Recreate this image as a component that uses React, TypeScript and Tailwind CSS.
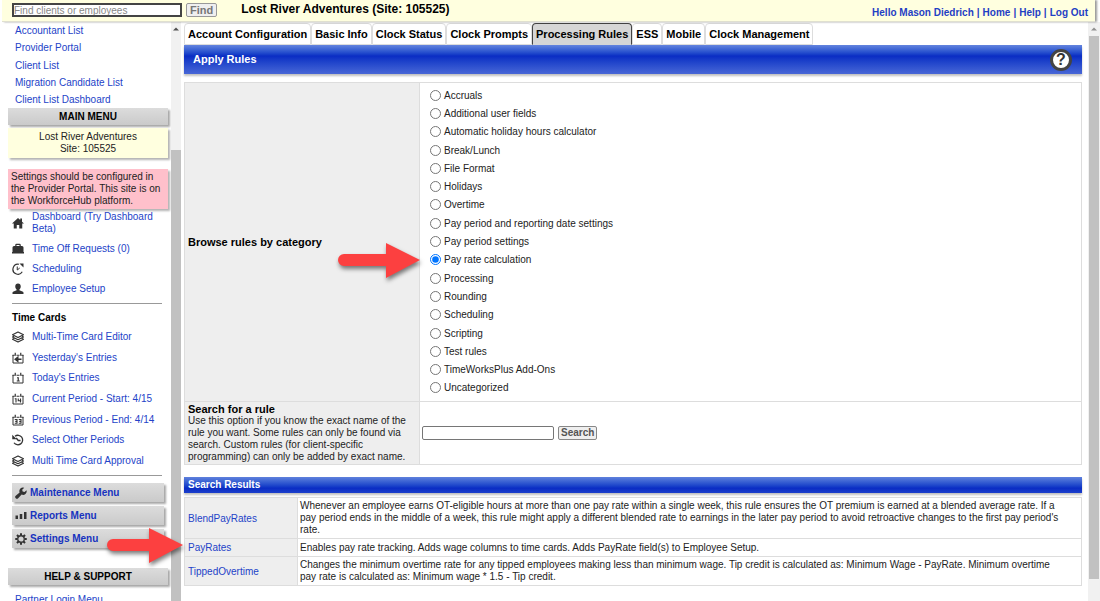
import type { ReactNode } from "react";

type IconName = "home" | "briefcase" | "update" | "user" | "layers" | "calBack" | "cal1" | "cal14" | "cal31" | "history" | "wrench" | "bars" | "gear";

function Calendar({ children }: { children: ReactNode }) {
  return (
    <>
      <path d="M2 6V22H22V6" fill="none" stroke="currentColor" strokeWidth="2" />
      <path d="M1 6.500H5M9 6.500H15M19 6.500H23M6.500 1.500v6M17.500 1.500v6" stroke="currentColor" strokeWidth="2.400" />
      {children}
    </>
  );
}

function Icon({ name }: { name: IconName }) {
  const art: Record<IconName, ReactNode> = {
    home: <path fill="currentColor" d="M12 2 0 13h3.500v10h6v-7h5v7h6V13H24l-4-3.700V3h-3.500v3.200z" />,
    briefcase: <path fill="currentColor" fillRule="evenodd" d="M6.500 6V4a2.500 2.500 0 0 1 2.500-2.500h6A2.500 2.500 0 0 1 17.500 4v2H20a3 3 0 0 1 3 3v9h1v3H0v-3h1V9a3 3 0 0 1 3-3zm2.500 0h6V4H9z" />,
    update: (
      <g fill="none" stroke="currentColor" strokeWidth="2.400">
        <path d="M14 2.500A10 10 0 1 0 20.500 17.500" />
        <path d="M10.500 7v7l5-4" strokeWidth="2" />
        <path d="M15 1H23V9z" fill="currentColor" stroke="none" />
      </g>
    ),
    user: <path fill="currentColor" d="M12 1c3.500 0 5.500 2.400 5.500 6 0 2.800-1.300 5-2.700 6.200v1.500l6 2.200c1.700.6 2.200 1.600 2.200 3.100v2H1v-2c0-1.500.5-2.500 2.200-3.100l6-2.200v-1.500C7.800 12 6.500 9.800 6.500 7c0-3.600 2-6 5.500-6z" />,
    layers: (
      <g fill="none" stroke="currentColor" strokeWidth="2.400" strokeLinejoin="round">
        <path d="M12 2 23 7.500 12 13 1 7.500z" />
        <path d="m4 10.500-3 1.500 11 5.500L23 12l-3-1.500M4 15l-3 1.500L12 22l11-5.500-3-1.500" />
      </g>
    ),
    calBack: <Calendar><path d="M19 14.500H10M11.500 10.500l-5 4 5 4z" stroke="currentColor" strokeWidth="3" fill="currentColor" /></Calendar>,
    cal1: <Calendar><path d="M10 11.500h2.500v6.500M9.500 18h6" stroke="currentColor" strokeWidth="2.400" fill="none" /></Calendar>,
    cal14: <Calendar><path d="M5.500 11.500H8v7.500M12.500 11v4.500h6M17 11v8" stroke="currentColor" strokeWidth="2.200" fill="none" /></Calendar>,
    cal31: <Calendar><path d="M5.500 11h4.500v7.500H5.500M6.500 14.700h3.500M13.500 11H18v7.500h-4.500M14.500 14.700H18" stroke="currentColor" strokeWidth="2.200" fill="none" /></Calendar>,
    history: (
      <g fill="none" stroke="currentColor" strokeWidth="2.600">
        <path d="M6 4.500A9.500 9.500 0 1 1 4 17.500" />
        <path d="M8.500 8 12.500 13H17" />
        <path d="M0.500 1.500v9h9z" fill="currentColor" stroke="none" />
      </g>
    ),
    wrench: <path fill="currentColor" d="M23 6.500 19 10l-3.700-.8-.9-3.700L18.500 1.500a7.200 7.200 0 0 0-9.300 9.300L1.500 17.500A3.200 3.200 0 0 0 6.300 22.500l7-7.300A7.200 7.200 0 0 0 23 6.500z" />,
    bars: <path fill="currentColor" d="M1 11h5v7H1zM9.500 8h5v10h-5zM18 4h5v14h-5z" />,
    gear: (
      <g fill="none" stroke="currentColor">
        <circle cx="12" cy="12" r="6.500" strokeWidth="2.600" />
        <path strokeWidth="4" d="M12 0.500v4.500M12 19v4.500M.5 12H5M19 12h4.500M3.900 3.900 7 7M17 17l3.100 3.100M3.900 20.100 7 17M17 7l3.100-3.100" />
      </g>
    ),
  };
  return (
    <svg viewBox="0 0 24 24" className="size-3 shrink-0 text-[#333]" aria-hidden="true">
      {art[name]}
    </svg>
  );
}

function Arrow({ className, shaft }: { className: string; shaft: number }) {
  const start = 50 - shaft;
  return (
    <svg viewBox="0 0 86 40" className={`pointer-events-none absolute z-20 h-10 w-[86px] drop-shadow-[1px_3px_2px_rgba(0,0,0,0.5)] ${className}`} aria-hidden="true">
      <path fill="#fc4040" d={`M${start} 12H50V1L84 18 50 36V24H${start}A6 6 0 0 1 ${start} 12Z`} />
    </svg>
  );
}

const topLinks = ["Accountant List", "Provider Portal", "Client List", "Migration Candidate List", "Client List Dashboard"];

const mainLinks: [IconName, string][] = [
  ["home", "Dashboard (Try Dashboard Beta)"],
  ["briefcase", "Time Off Requests (0)"],
  ["update", "Scheduling"],
  ["user", "Employee Setup"],
];

const cardLinks: [IconName, string][] = [
  ["layers", "Multi-Time Card Editor"],
  ["calBack", "Yesterday's Entries"],
  ["cal1", "Today's Entries"],
  ["cal14", "Current Period - Start: 4/15"],
  ["cal31", "Previous Period - End: 4/14"],
  ["history", "Select Other Periods"],
  ["layers", "Multi Time Card Approval"],
];

const menus: [IconName, string][] = [
  ["wrench", "Maintenance Menu"],
  ["bars", "Reports Menu"],
  ["gear", "Settings Menu"],
];

const tabs = ["Account Configuration", "Basic Info", "Clock Status", "Clock Prompts", "Processing Rules", "ESS", "Mobile", "Clock Management"];

const categories = [
  "Accruals", "Additional user fields", "Automatic holiday hours calculator", "Break/Lunch", "File Format", "Holidays",
  "Overtime", "Pay period and reporting date settings", "Pay period settings", "Pay rate calculation", "Processing",
  "Rounding", "Scheduling", "Scripting", "Test rules", "TimeWorksPlus Add-Ons", "Uncategorized",
];

const results = [
  ["BlendPayRates", "Whenever an employee earns OT-eligible hours at more than one pay rate within a single week, this rule ensures the OT premium is earned at a blended average rate. If a pay period ends in the middle of a week, this rule might apply a different blended rate to earnings in the later pay period to avoid retroactive changes to the first pay period's rate."],
  ["PayRates", "Enables pay rate tracking. Adds wage columns to time cards. Adds PayRate field(s) to Employee Setup."],
  ["TippedOvertime", "Changes the minimum overtime rate for any tipped employees making less than minimum wage. Tip credit is calculated as: Minimum Wage - PayRate. Minimum overtime pay rate is calculated as: Minimum wage * 1.5 - Tip credit."],
];

function SectionTitle({ children }: { children: ReactNode }) {
  return (
    <h2 className="bg-linear-to-b from-[#dcdcdc] to-[#cacaca] text-center text-[10px] leading-[17px] font-bold text-black shadow-[2px_2px_2px_rgba(0,0,0,0.35)]">
      {children}
    </h2>
  );
}

function NavRow({ icon, label }: { icon: IconName; label: string }) {
  return (
    <li className="flex items-center gap-2 pt-[2px] pb-[6px] pl-1">
      <Icon name={icon} />
      <a href="#" className="leading-[12px] text-[#2343c8]">{label}</a>
    </li>
  );
}

function Sidebar() {
  return (
    <div className="flex w-[181px] shrink-0">
      <nav className="w-[171px] pl-2">
        <ul className="flex h-[86px] flex-col pl-[7px]">
          {topLinks.map((t) => (
            <li key={t} className="flex flex-1 items-center">
              <a href="#" className="text-[#2343c8]">{t}</a>
            </li>
          ))}
        </ul>
        <div className="pr-[3px]">
          <SectionTitle>MAIN MENU</SectionTitle>
          <div className="mt-[3px] bg-[#ffffdf] py-[3px] text-center leading-[12px] shadow-[2px_2px_2px_rgba(0,0,0,0.3)]">
            <p>Lost River Adventures</p>
            <p>Site: 105525</p>
          </div>
          <p className="mt-[11px] bg-[#ffc0cb] py-[2px] pl-[3px] leading-[12px] shadow-[2px_2px_2px_rgba(0,0,0,0.3)]">
            Settings should be configured in the Provider Portal. This site is on the WorkforceHub platform.
          </p>
          <ul>
            {mainLinks.map(([i, t]) => <NavRow key={t} icon={i} label={t} />)}
          </ul>
          <hr className="mt-[2px] mr-[6px] ml-1 border-[#999]" />
          <h3 className="mt-[6px] pl-1 text-[10px] leading-[15px] font-bold text-black">Time Cards</h3>
          <ul className="mt-1 flex h-[144px] flex-col justify-between">
            {cardLinks.map(([i, t]) => <NavRow key={t} icon={i} label={t} />)}
          </ul>
          <hr className="mt-[2px] mr-[6px] ml-1 border-[#999]" />
          <div className="mt-[7px] mr-1 ml-1 flex flex-col gap-1">
            {menus.map(([i, t]) => (
              <div key={t} className="relative">
                <button type="button" className="flex h-[19px] w-full items-center gap-[3px] bg-linear-to-b from-[#dcdcdc] to-[#cacaca] pl-[3px] text-left text-[10px] font-bold text-[#1733bf] shadow-[2px_2px_2px_rgba(0,0,0,0.35)]">
                  <Icon name={i} />
                  {t}
                </button>
                {t === "Settings Menu" && <Arrow shaft={36} className="-top-[2px] left-[87px]" />}
              </div>
            ))}
          </div>
          <div className="mt-5">
            <SectionTitle>HELP &amp; SUPPORT</SectionTitle>
          </div>
          <a href="#" className="mt-[6px] block pl-[7px] leading-[17px] text-[#2343c8]">Partner Login Menu</a>
        </div>
      </nav>
      <div className="flex w-[10px] flex-col items-center bg-[#f1f1f1]">
        <svg viewBox="0 0 10 10" className="my-[2px] size-[10px]" aria-hidden="true"><path fill="#505050" d="M2 6.500 5 3.500 8 6.500z" /></svg>
        <div className="mt-[114px] w-full flex-1 bg-[#c1c1c1]" />
      </div>
    </div>
  );
}

function Rules() {
  return (
    <table className="mt-2 w-full border-collapse text-left">
      <tbody>
        <tr>
          <th scope="row" className="w-[235px] border border-[#ddd] bg-[#eee] px-[3px] align-middle text-[11px] font-bold text-black">
            Browse rules by category
          </th>
          <td className="border border-[#ddd] pt-[3px] pb-1 pl-[10px]">
            <div className="flex h-[311px] flex-col">
              {categories.map((c) => (
                <div key={c} className="relative flex flex-1 items-center">
                  {c === "Pay rate calculation" && <Arrow shaft={42} className="-top-[9px] -left-[94px]" />}
                  <label className="flex items-center gap-[3px]">
                    <input type="radio" name="category" defaultChecked={c === "Pay rate calculation"} className="size-[11px]" />
                    {c}
                  </label>
                </div>
              ))}
            </div>
          </td>
        </tr>
        <tr>
          <th scope="row" className="border border-[#ddd] bg-[#eee] px-[3px] py-px align-top font-normal">
            <label htmlFor="rule" className="block text-[11px] leading-[12px] font-bold text-black">Search for a rule</label>
            <p className="leading-[12px]">
              Use this option if you know the exact name of the rule you want. Some rules can only be found via search. Custom rules (for client-specific programming) can only be added by exact name.
            </p>
          </th>
          <td className="border border-[#ddd] pl-[2px]">
            <div className="flex items-center gap-1">
              <input id="rule" className="h-[14px] w-[132px] rounded-[2px] border border-[#767676] bg-white px-[2px]" />
              <button type="button" className="h-[14px] rounded-[2px] border border-[#888] bg-[#efefef] px-[2px] text-[10px] leading-[12px] font-bold text-[#555]">Search</button>
            </div>
          </td>
        </tr>
      </tbody>
    </table>
  );
}

export default function App() {
  return (
    <div className="flex h-screen flex-col overflow-hidden bg-white font-['Liberation_Sans',Arial,sans-serif] text-[10px] text-[#222]">
      <header className="relative mr-[5px] ml-[2px] flex h-[22px] shrink-0 items-start border-b border-[#e0e0d0] bg-[#ffffdf] shadow-[2px_0_2px_rgba(0,0,0,0.4)]">
        <form className="flex gap-1 pt-[3px] pl-[10px]" onSubmit={(e) => e.preventDefault()}>
          <input aria-label="Find clients or employees" placeholder="Find clients or employees" className="h-[14px] w-[170px] border-2 border-[#444] bg-white text-[10px] leading-[10px] placeholder:text-[#888]" />
          <button type="button" className="h-[14px] rounded-[2px] border border-[#999] bg-[#efefef] px-[3px] text-[11px] leading-[12px] font-bold text-[#777]">Find</button>
        </form>
        <h1 className="ml-6 pt-[2px] text-[12px] leading-[14px] font-bold text-black">Lost River Adventures (Site: 105525)</h1>
        <nav className="mr-[7px] ml-auto flex gap-[3px] pt-[6px] text-[10px] leading-[13px] font-bold text-[#1f40c4]">
          <a href="#">Hello Mason Diedrich</a><span>|</span><a href="#">Home</a><span>|</span><a href="#">Help</a><span>|</span><a href="#">Log Out</a>
        </nav>
      </header>
      <div className="flex min-h-0 flex-1">
        <Sidebar />
        <main className="min-w-0 flex-1 pr-[6px] pl-[3px]">
          <nav className="flex pt-px">
            {tabs.map((t) => (
              <a key={t} href="#" className={t === "Processing Rules" ? "rounded-t-[4px] border border-[#444] border-b-[#d6d6d6] bg-[#d6d6d6] px-[3px] text-[11px] leading-[20px] font-bold text-black" : "rounded-t-[4px] border border-[#ddd] bg-white px-[3px] text-[11px] leading-[20px] font-bold text-black"}>
                {t}
              </a>
            ))}
          </nav>
          <div className="flex h-[29px] items-center justify-between bg-linear-to-b from-[#6484de] from-0% via-[#0a2cc4] via-38% to-[#4866d6] to-100% pr-[10px] pl-[9px] shadow-[0_2px_2px_rgba(0,0,0,0.25)]">
            <h2 className="text-[11px] font-bold text-white">Apply Rules</h2>
            <button type="button" aria-label="Help" className="flex size-[22px] items-center justify-center rounded-full border-3 border-[#444] bg-white text-[16px] leading-none font-bold text-[#333]">?</button>
          </div>
          <Rules />
          <h2 className="mt-3 h-4 bg-linear-to-b from-[#5f80dc] via-[#0a2cc4] via-70% to-[#1c3fcb] pl-1 text-[10px] leading-[15px] font-bold text-white shadow-[0_2px_2px_rgba(0,0,0,0.25)]">Search Results</h2>
          <table className="mt-1 w-full border-collapse text-left">
            <tbody>
              {results.map(([name, text]) => (
                <tr key={name} className="h-[18px]">
                  <th scope="row" className="w-[113px] border border-[#ddd] bg-[#eee] px-[3px] font-normal">
                    <a href="#" className="text-[#2343c8]">{name}</a>
                  </th>
                  <td className="border border-[#ddd] py-[2px] pr-[14px] pl-[2px] leading-[12px]">{text}</td>
                </tr>
              ))}
            </tbody>
          </table>
        </main>
        <div className="flex w-3 shrink-0 flex-col items-center bg-[#f1f1f1]">
          <svg viewBox="0 0 10 10" className="my-[2px] size-[10px]" aria-hidden="true"><path fill="#909090" d="M2 6.500 5 3.500 8 6.500z" /></svg>
          <div className="mb-[22px] w-[10px] flex-1 bg-[#c1c1c1]" />
        </div>
      </div>
    </div>
  );
}
